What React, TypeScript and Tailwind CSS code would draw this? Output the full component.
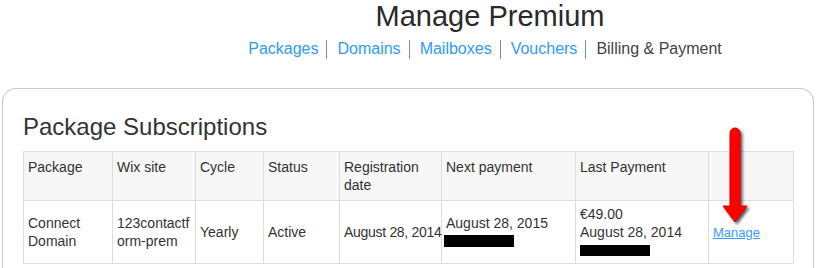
import React from "react";

const navItems = ["Packages", "Domains", "Mailboxes", "Vouchers"];

const cols = [89, 83, 68, 76, 102, 134, 133, 85];

export default function App() {
  const th =
    "border border-[#dddddd] bg-[#f7f7f7] px-[4px] pt-[6px] pb-[6px] text-left align-top font-normal";
  const td = "border border-[#dddddd] px-[4px] py-[4px] align-middle";

  return (
    <div className="relative h-[268px] w-[816px] overflow-hidden bg-white font-['Liberation_Sans',Arial,sans-serif] text-[#333333]">
      <div className="flex flex-col items-center pl-[154px]">
        <h1 className="mt-[1px] pl-[10px] text-[29px] leading-[30px] text-[#2a2a2a]">
          Manage Premium
        </h1>
        <nav className="mt-[8px] flex items-center text-[16px] leading-[20px]">
          {navItems.map((item) => (
            <React.Fragment key={item}>
              <a href="#" className="text-[#2f9bf5]">
                {item}
              </a>
              <span className="ml-[8px] mr-[10px] h-[19px] w-px bg-[#8a8a8a]" />
            </React.Fragment>
          ))}
          <span className="text-[#444444]">Billing &amp; Payment</span>
        </nav>
      </div>

      {/* card */}
      <div className="mx-[2px] mt-[29px] h-[180px] rounded-t-[14px] border border-b-0 border-[#c8c8c8] px-[20px] pt-[24px]">
        <h2 className="text-[24px] leading-[28px] text-[#333333]">Package Subscriptions</h2>
        <table className="mt-[10px] w-[770px] table-fixed border-collapse text-[14px] leading-[18px]">
          <colgroup>
            {cols.map((w, i) => (
              <col key={i} style={{ width: w }} />
            ))}
          </colgroup>
          <thead>
            <tr className="h-[49px]">
              <th className={th}>Package</th>
              <th className={th}>Wix site</th>
              <th className={th}>Cycle</th>
              <th className={th}>Status</th>
              <th className={th}>
                Registration
                <br />
                date
              </th>
              <th className={th}>Next payment</th>
              <th className={th}>Last Payment</th>
              <th className={th}></th>
            </tr>
          </thead>
          <tbody>
            <tr className="h-[63px]">
              <td className={td}>
                Connect
                <br />
                Domain
              </td>
              <td className={td}>
                123contactf
                <br />
                orm-prem
              </td>
              <td className={td}>Yearly</td>
              <td className={td}>Active</td>
              <td className={`${td} whitespace-nowrap tracking-[-0.3px]`}>August 28, 2014</td>
              <td className={td}>
                <div>August 28, 2015</div>
                <div className="flex h-[18px] items-center">
                  <span className="-ml-[2px] h-[12px] w-[70px] bg-black" />
                </div>
              </td>
              <td className={td}>
                <div>€49.00</div>
                <div>August 28, 2014</div>
                <div className="flex h-[18px] items-center">
                  <span className="h-[11px] w-[70px] bg-black" />
                </div>
              </td>
              <td className={td}>
                <a href="#" className="text-[13px] text-[#3d9bff] underline">
                  Manage
                </a>
              </td>
            </tr>
          </tbody>
        </table>
      </div>
      <div className="h-[2px] bg-[#eef2f6]" />

      {/* red arrow annotation */}
      <svg
        className="absolute left-[718px] top-[122px] drop-shadow-[2px_2px_1.5px_rgba(0,0,0,0.65)]"
        width="40"
        height="106"
        viewBox="0 0 40 106"
      >
        <path
          d="M12 11 A5 5 0 0 1 22 11 L22 84 L29 84 L17 100 L5 84 L12 84 Z"
          fill="#ff0000"
          stroke="#d80000"
          strokeWidth="1"
          strokeLinejoin="round"
        />
      </svg>
    </div>
  );
}
